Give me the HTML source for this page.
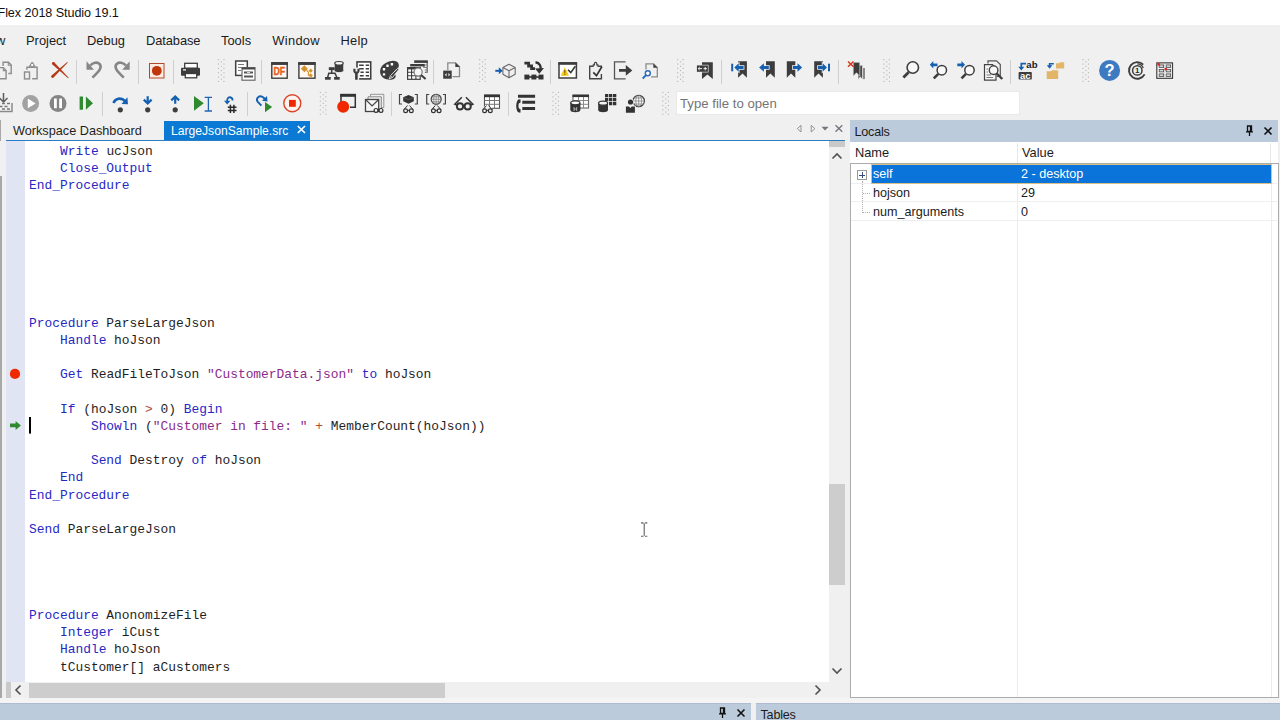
<!DOCTYPE html>
<html lang="en">
<head>
<meta charset="utf-8">
<title>Flex 2018 Studio 19.1</title>
<style>
*{box-sizing:border-box;margin:0;padding:0}
html,body{width:1280px;height:720px;overflow:hidden;background:#f0f0f0}
body{position:relative;font-family:"Liberation Sans",sans-serif;font-size:13px;color:#1e1e1e}
.abs{position:absolute}
.t{position:absolute;white-space:pre;line-height:1}
#title{left:0;top:0;width:1280px;height:25px;background:#fff}
#menubar{left:0;top:25px;width:1280px;height:30px;background:#f0f0f0}
.mi{position:absolute;top:34.500px;font-size:12.9px;white-space:pre;line-height:1;color:#1b1b1b}
.sep{position:absolute;width:1px;background:#d4d4d4}
.grip{position:absolute;width:6px;height:22px;background-image:radial-gradient(circle,#c2c2c2 0.7px,transparent 1px);background-size:3px 3px}
svg.ic{position:absolute;overflow:visible}
#ed{left:6px;top:141px;width:823px;height:540.500px;background:#fff}
#gut{left:6px;top:141px;width:19px;height:540.500px;background:#e1e4f3}
.cl{position:absolute;left:29px;font-family:"Liberation Mono",monospace;font-size:12.9px;white-space:pre;line-height:17px;height:17px;color:#1e1e1e}
.k{color:#2727c4}.s{color:#8a2a8a}.o{color:#b8482f}
.hd{background:#bccbdc}
.lt{position:absolute;white-space:pre;line-height:1;font-size:12.6px;color:#1b1b1b}
</style>
</head>
<body>
<!--TITLE-->
<div id="title" class="abs"></div>
<div class="t" style="left:-2.500px;top:7px;font-size:12.600px;letter-spacing:-0.060px;color:#111">Flex 2018 Studio 19.1</div>
<!--MENU-->
<div id="menubar" class="abs"></div>
<div class="mi" style="left:-4px">w</div>
<div class="mi" style="left:26px">Project</div>
<div class="mi" style="left:87px">Debug</div>
<div class="mi" style="left:146px;letter-spacing:-0.100px">Database</div>
<div class="mi" style="left:221px">Tools</div>
<div class="mi" style="left:272.300px;letter-spacing:0.300px">Window</div>
<div class="mi" style="left:340.600px;letter-spacing:0.200px">Help</div>
<!--TOOLBAR1-->
<svg class="ic" style="left:0;top:55px" width="1280" height="65" viewBox="0 55 1280 65" fill="none" stroke-linecap="butt">
<g id="seps" stroke="#cfcfcf" stroke-width="1">
<path d="M76.5 60V84M138.5 60V84M173.5 60V84M261.5 60V84M433.5 60V84M550.5 60V84M721.5 60V84M838.5 60V84M1010.5 60V84"/>
<path d="M102.5 92V116M247.5 92V116M391.5 92V116M508.5 92V116"/>
</g>
<g id="grips" fill="#b4b4b4"><rect x="217.9" y="59.1" width="1.1" height="1.1"/><rect x="223.4" y="59.1" width="1.1" height="1.1"/><rect x="220.8" y="61.3" width="1.1" height="1.1"/><rect x="217.9" y="63.5" width="1.1" height="1.1"/><rect x="223.4" y="63.5" width="1.1" height="1.1"/><rect x="220.8" y="65.7" width="1.1" height="1.1"/><rect x="217.9" y="67.8" width="1.1" height="1.1"/><rect x="223.4" y="67.8" width="1.1" height="1.1"/><rect x="220.8" y="70.0" width="1.1" height="1.1"/><rect x="217.9" y="72.2" width="1.1" height="1.1"/><rect x="223.4" y="72.2" width="1.1" height="1.1"/><rect x="220.8" y="74.4" width="1.1" height="1.1"/><rect x="217.9" y="76.5" width="1.1" height="1.1"/><rect x="223.4" y="76.5" width="1.1" height="1.1"/><rect x="220.8" y="78.7" width="1.1" height="1.1"/><rect x="217.9" y="80.9" width="1.1" height="1.1"/><rect x="223.4" y="80.9" width="1.1" height="1.1"/><rect x="479.1" y="59.1" width="1.1" height="1.1"/><rect x="484.6" y="59.1" width="1.1" height="1.1"/><rect x="482.0" y="61.3" width="1.1" height="1.1"/><rect x="479.1" y="63.5" width="1.1" height="1.1"/><rect x="484.6" y="63.5" width="1.1" height="1.1"/><rect x="482.0" y="65.7" width="1.1" height="1.1"/><rect x="479.1" y="67.8" width="1.1" height="1.1"/><rect x="484.6" y="67.8" width="1.1" height="1.1"/><rect x="482.0" y="70.0" width="1.1" height="1.1"/><rect x="479.1" y="72.2" width="1.1" height="1.1"/><rect x="484.6" y="72.2" width="1.1" height="1.1"/><rect x="482.0" y="74.4" width="1.1" height="1.1"/><rect x="479.1" y="76.5" width="1.1" height="1.1"/><rect x="484.6" y="76.5" width="1.1" height="1.1"/><rect x="482.0" y="78.7" width="1.1" height="1.1"/><rect x="479.1" y="80.9" width="1.1" height="1.1"/><rect x="484.6" y="80.9" width="1.1" height="1.1"/><rect x="677.1" y="59.1" width="1.1" height="1.1"/><rect x="682.6" y="59.1" width="1.1" height="1.1"/><rect x="680.0" y="61.3" width="1.1" height="1.1"/><rect x="677.1" y="63.5" width="1.1" height="1.1"/><rect x="682.6" y="63.5" width="1.1" height="1.1"/><rect x="680.0" y="65.7" width="1.1" height="1.1"/><rect x="677.1" y="67.8" width="1.1" height="1.1"/><rect x="682.6" y="67.8" width="1.1" height="1.1"/><rect x="680.0" y="70.0" width="1.1" height="1.1"/><rect x="677.1" y="72.2" width="1.1" height="1.1"/><rect x="682.6" y="72.2" width="1.1" height="1.1"/><rect x="680.0" y="74.4" width="1.1" height="1.1"/><rect x="677.1" y="76.5" width="1.1" height="1.1"/><rect x="682.6" y="76.5" width="1.1" height="1.1"/><rect x="680.0" y="78.7" width="1.1" height="1.1"/><rect x="677.1" y="80.9" width="1.1" height="1.1"/><rect x="682.6" y="80.9" width="1.1" height="1.1"/><rect x="883.4" y="59.1" width="1.1" height="1.1"/><rect x="888.9" y="59.1" width="1.1" height="1.1"/><rect x="886.3" y="61.3" width="1.1" height="1.1"/><rect x="883.4" y="63.5" width="1.1" height="1.1"/><rect x="888.9" y="63.5" width="1.1" height="1.1"/><rect x="886.3" y="65.7" width="1.1" height="1.1"/><rect x="883.4" y="67.8" width="1.1" height="1.1"/><rect x="888.9" y="67.8" width="1.1" height="1.1"/><rect x="886.3" y="70.0" width="1.1" height="1.1"/><rect x="883.4" y="72.2" width="1.1" height="1.1"/><rect x="888.9" y="72.2" width="1.1" height="1.1"/><rect x="886.3" y="74.4" width="1.1" height="1.1"/><rect x="883.4" y="76.5" width="1.1" height="1.1"/><rect x="888.9" y="76.5" width="1.1" height="1.1"/><rect x="886.3" y="78.7" width="1.1" height="1.1"/><rect x="883.4" y="80.9" width="1.1" height="1.1"/><rect x="888.9" y="80.9" width="1.1" height="1.1"/><rect x="1082.4" y="59.1" width="1.1" height="1.1"/><rect x="1087.9" y="59.1" width="1.1" height="1.1"/><rect x="1085.3" y="61.3" width="1.1" height="1.1"/><rect x="1082.4" y="63.5" width="1.1" height="1.1"/><rect x="1087.9" y="63.5" width="1.1" height="1.1"/><rect x="1085.3" y="65.7" width="1.1" height="1.1"/><rect x="1082.4" y="67.8" width="1.1" height="1.1"/><rect x="1087.9" y="67.8" width="1.1" height="1.1"/><rect x="1085.3" y="70.0" width="1.1" height="1.1"/><rect x="1082.4" y="72.2" width="1.1" height="1.1"/><rect x="1087.9" y="72.2" width="1.1" height="1.1"/><rect x="1085.3" y="74.4" width="1.1" height="1.1"/><rect x="1082.4" y="76.5" width="1.1" height="1.1"/><rect x="1087.9" y="76.5" width="1.1" height="1.1"/><rect x="1085.3" y="78.7" width="1.1" height="1.1"/><rect x="1082.4" y="80.9" width="1.1" height="1.1"/><rect x="1087.9" y="80.9" width="1.1" height="1.1"/><rect x="319.8" y="91.9" width="1.1" height="1.1"/><rect x="325.3" y="91.9" width="1.1" height="1.1"/><rect x="322.7" y="94.1" width="1.1" height="1.1"/><rect x="319.8" y="96.3" width="1.1" height="1.1"/><rect x="325.3" y="96.3" width="1.1" height="1.1"/><rect x="322.7" y="98.5" width="1.1" height="1.1"/><rect x="319.8" y="100.6" width="1.1" height="1.1"/><rect x="325.3" y="100.6" width="1.1" height="1.1"/><rect x="322.7" y="102.8" width="1.1" height="1.1"/><rect x="319.8" y="105.0" width="1.1" height="1.1"/><rect x="325.3" y="105.0" width="1.1" height="1.1"/><rect x="322.7" y="107.2" width="1.1" height="1.1"/><rect x="319.8" y="109.3" width="1.1" height="1.1"/><rect x="325.3" y="109.3" width="1.1" height="1.1"/><rect x="322.7" y="111.5" width="1.1" height="1.1"/><rect x="319.8" y="113.7" width="1.1" height="1.1"/><rect x="325.3" y="113.7" width="1.1" height="1.1"/><rect x="552.4" y="91.9" width="1.1" height="1.1"/><rect x="557.9" y="91.9" width="1.1" height="1.1"/><rect x="555.3" y="94.1" width="1.1" height="1.1"/><rect x="552.4" y="96.3" width="1.1" height="1.1"/><rect x="557.9" y="96.3" width="1.1" height="1.1"/><rect x="555.3" y="98.5" width="1.1" height="1.1"/><rect x="552.4" y="100.6" width="1.1" height="1.1"/><rect x="557.9" y="100.6" width="1.1" height="1.1"/><rect x="555.3" y="102.8" width="1.1" height="1.1"/><rect x="552.4" y="105.0" width="1.1" height="1.1"/><rect x="557.9" y="105.0" width="1.1" height="1.1"/><rect x="555.3" y="107.2" width="1.1" height="1.1"/><rect x="552.4" y="109.3" width="1.1" height="1.1"/><rect x="557.9" y="109.3" width="1.1" height="1.1"/><rect x="555.3" y="111.5" width="1.1" height="1.1"/><rect x="552.4" y="113.7" width="1.1" height="1.1"/><rect x="557.9" y="113.7" width="1.1" height="1.1"/><rect x="662.3" y="91.9" width="1.1" height="1.1"/><rect x="667.8" y="91.9" width="1.1" height="1.1"/><rect x="665.2" y="94.1" width="1.1" height="1.1"/><rect x="662.3" y="96.3" width="1.1" height="1.1"/><rect x="667.8" y="96.3" width="1.1" height="1.1"/><rect x="665.2" y="98.5" width="1.1" height="1.1"/><rect x="662.3" y="100.6" width="1.1" height="1.1"/><rect x="667.8" y="100.6" width="1.1" height="1.1"/><rect x="665.2" y="102.8" width="1.1" height="1.1"/><rect x="662.3" y="105.0" width="1.1" height="1.1"/><rect x="667.8" y="105.0" width="1.1" height="1.1"/><rect x="665.2" y="107.2" width="1.1" height="1.1"/><rect x="662.3" y="109.3" width="1.1" height="1.1"/><rect x="667.8" y="109.3" width="1.1" height="1.1"/><rect x="665.2" y="111.5" width="1.1" height="1.1"/><rect x="662.3" y="113.7" width="1.1" height="1.1"/><rect x="667.8" y="113.7" width="1.1" height="1.1"/></g>
<!--G1-->
<g stroke="#8c8c8c" stroke-width="1.400">
<path d="M3.100 66V62.200H8.500L11.200 65V73.500H8.300"/><path d="M8.300 62.200V65.200H11.200" stroke-width="1.100"/>
<path d="M-2 67.600H3.300L6.100 70.500V78.800H-2"/><path d="M3.300 67.600V70.600H6.100" stroke-width="1.100"/>
<path d="M26.900 69.800V67.200H37.100V78.800H32.200"/>
<path d="M28.600 66.800L30.900 62.900C31.500 61.800 32.900 61.800 33.500 62.900L35.700 66.800Z" fill="#8c8c8c" stroke="none"/><circle cx="32.200" cy="64.900" r="1.200" fill="#f6f6f6" stroke="none"/>
<rect x="24.500" y="72" width="5" height="6.900"/>
</g>
<g fill="#b53a18"><path d="M52.4 64.4L68.1 78.3L68.7 77.7L54.4 62.4Z"/><circle cx="53.4" cy="63.4" r="1.45"/><path d="M53.6 77.6L67.8 62.5L67.2 61.9L51.6 75.6Z"/><circle cx="52.6" cy="76.6" r="1.45"/></g>
<g stroke="#868686" stroke-width="2.600">
<path d="M90.3 65.6C92.5 62.5 97.5 61.6 99.7 64.2C102.2 67.2 100.0 70.5 92.4 77.6"/>
<path d="M86.5 61.2L86.5 69.8L94.0 69.8Z" fill="#868686" stroke="none"/>
<path d="M125.9 65.6C123.7 62.5 118.7 61.6 116.5 64.2C114.0 67.2 116.2 70.5 123.8 77.6"/>
<path d="M129.7 61.2L129.7 69.8L122.2 69.8Z" fill="#868686" stroke="none"/>
</g>
<!--G2-->
<rect x="149.500" y="63.500" width="14.500" height="14.500" fill="#fcece4" stroke="#b4472b" stroke-width="1"/>
<circle cx="156.800" cy="70.800" r="4.900" fill="#c0360c"/>
<g>
<rect x="184.700" y="63.300" width="12.600" height="5" fill="#fff" stroke="#3d3d3d" stroke-width="1.300"/>
<rect x="181" y="67.800" width="19" height="8" rx="1" fill="#3d3d3d"/>
<rect x="185.300" y="73.500" width="11.400" height="4.300" fill="#fff" stroke="#3d3d3d" stroke-width="1.300"/>
<rect x="183" y="69.300" width="3" height="1.200" fill="#fff"/>
</g>
<g>
<rect x="235.700" y="61" width="11.600" height="14.400" fill="#fff" stroke="#404040" stroke-width="1.500"/>
<path d="M238 64.500H244M238 67.500H242M238 70.500H241" stroke="#7a7a7a" stroke-width="1.200"/>
<rect x="242" y="67.600" width="13" height="12.600" fill="#fff" stroke="#6a6a6a" stroke-width="1.200"/>
<path d="M242 68.500H255" stroke="#4a4a4a" stroke-width="2"/>
<path d="M244 72.500H253M244 76.500H253" stroke="#555" stroke-width="1.800"/>
<path d="M247 72.500H250" stroke="#fff" stroke-width="0.800"/>
</g>
<!--G3-->
<g>
<rect x="271.800" y="63" width="15.400" height="15.200" fill="#fff8f3" stroke="#3d3d3d" stroke-width="1.400"/>
<path d="M271.100 63.500H287.900" stroke="#3d3d3d" stroke-width="2.900"/>
<text x="273.500" y="75.400" font-family="Liberation Sans, sans-serif" font-weight="bold" font-size="11.300" fill="#e5601c" stroke="#e5601c" stroke-width="0.400" textLength="11.600" lengthAdjust="spacingAndGlyphs">DF</text>
<rect x="298.900" y="63" width="16.100" height="15.200" fill="#fff8f3" stroke="#3d3d3d" stroke-width="1.400"/>
<path d="M298.200 63.500H315.700" stroke="#3d3d3d" stroke-width="2.900"/>
<path d="M304.400 65.300L307.900 68.800L304.400 72.300L300.900 68.800Z" fill="#d8902a"/>
<path d="M310.700 68.600L312.800 70.700L310.700 72.800L308.600 70.700Z" fill="#d8902a"/>
<path d="M310.700 73.300L312.800 75.400L310.700 77.500L308.600 75.400Z" fill="#d8902a"/>
<path d="M306.500 70.200L308.400 72V75.300H310" stroke="#d8902a" stroke-width="1.100"/>
</g>
<g fill="#3d3d3d">
<path d="M334.200 63V70.600C334.200 73.300 343.800 73.300 343.800 70.600V63Z" stroke="#f0f0f0" stroke-width="1"/>
<ellipse cx="339" cy="63.300" rx="4.200" ry="1.800" fill="#f6f6f6" stroke="#3d3d3d" stroke-width="1.200"/>
<rect x="328.800" y="67.200" width="5.900" height="2.900"/>
<rect x="325" y="77" width="5.700" height="2.700"/><rect x="334.100" y="77" width="5.600" height="2.700"/>
<path d="M331.700 70V73.200M327.700 77.300L328.800 73.200H335L336.800 77.300" fill="none" stroke="#3d3d3d" stroke-width="1.500"/>
</g>
<g>
<rect x="357" y="61.900" width="13.700" height="17" fill="#fff" stroke="#3d3d3d" stroke-width="1.600"/>
<path d="M359.100 65.200H363.700M365.700 65.200H369M359.100 68.800H363.700M365.700 68.800H369M360.500 72.200H363.700M365.700 72.200H369M359.800 75.700H363.700M365.700 75.700H369" stroke="#3d3d3d" stroke-width="1.600"/>
<rect x="352.500" y="67.600" width="6.600" height="13" fill="#f0f0f0"/>
<path d="M353.300 68.700V70.500C353.300 72.300 354.300 73.200 355.100 73.500V79.700H357.700V73.500C358.600 73.200 359.600 72.300 359.600 70.500V68.700H357.400V71.400H355.500V68.700H353.300Z" fill="#3d3d3d"/>
</g>
<g>
<path d="M392 60.900C397 60.400 399.800 63.500 398.600 67C397.800 69.300 395 69.600 394.300 71.200C393.600 73 396.800 75 395.400 77.400C394.200 79.500 390 80.400 386.500 79.300C382 78 379.500 74.300 380.200 70.200C381 65.300 386 61.500 392 60.900Z" fill="#3d3d3d"/>
<rect x="390.700" y="63" width="2.400" height="2.400" rx="0.500" fill="#fff"/><rect x="386.300" y="64.600" width="2.400" height="2.400" rx="0.500" fill="#fff"/><rect x="382.800" y="68" width="2.400" height="2.400" rx="0.500" fill="#fff"/><rect x="382.800" y="73.200" width="2.400" height="2.400" rx="0.500" fill="#fff"/>
<path d="M399 69.300L392.500 77.500L389.200 78.800L390.500 75.600L397.800 68.300Z" fill="#3d3d3d" stroke="#f0f0f0" stroke-width="0.900"/>
<path d="M391 76.200L392.300 77.400" stroke="#f0f0f0" stroke-width="0.700"/>
</g>
<!--G4-->
<g stroke="#555" stroke-width="1.100">
<path d="M427.200 61V72.300H424.800" stroke="#555"/><path d="M414.200 61.600H427.800" stroke="#3d3d3d" stroke-width="2.600"/>
<path d="M424.800 65H427M424.800 67.500H427M424.800 70H427" stroke="#777"/>
<path d="M424 64.500V68" stroke="#555"/><path d="M410.200 65.200H424.600" stroke="#3d3d3d" stroke-width="2.400"/>
<rect x="407.600" y="67.600" width="12.600" height="11.700" fill="#fff" stroke="#3d3d3d" stroke-width="1.200"/>
<path d="M407 68.300H420.500" stroke="#3d3d3d" stroke-width="2.200"/>
<path d="M407.600 72.300H420M407.600 75.800H420M411.600 69V79M415.900 69V79" stroke="#3d3d3d" stroke-width="1.100"/>
<circle cx="418.100" cy="72" r="4.100" fill="#f6f6f6" stroke="#777" stroke-width="1.200"/>
<path d="M421 75L425.600 79" stroke="#3d3d3d" stroke-width="2.100"/>
</g>
<g>
<path d="M447.800 70V62.900H455.500L459.500 66.800V76.600H452.500" stroke="#8a8a8a" stroke-width="1.300"/>
<path d="M455.300 62.400V67H460Z" fill="#3d3d3d"/>
<rect x="443.200" y="70.600" width="8.500" height="8.100" fill="#3d3d3d"/>
<path d="M446.600 73.100V76.500L444.800 74.800ZM448.400 73.100V76.500L450.200 74.800Z" fill="#e8e8e8"/>
</g>
<g>
<path d="M495.300 70.800H500" stroke="#1560b0" stroke-width="2"/><path d="M498.800 67.300L502.800 70.800L498.800 74.300Z" fill="#1560b0"/>
<path d="M509 64.200L515.200 67.500V74.300L509 77.700L502.900 74.300V67.500ZM502.900 67.500L509 70.800L515.200 67.500M509 70.800V77.700" stroke="#6a6a6a" stroke-width="1.100" stroke-linejoin="round"/>
</g>
<!--G5-->
<g fill="#333">
<path d="M524.400 63.200H528.600V66H531.600V68.700H535" fill="none" stroke="#333" stroke-width="2.800"/>
<path d="M535.500 62.300C539.800 62.800 541.300 66.500 540.500 70" fill="none" stroke="#333" stroke-width="2.400"/>
<path d="M535 68.600L544 68L539.300 73.800Z"/>
<rect x="524.400" y="74.600" width="5" height="4.900"/><rect x="531.400" y="74.600" width="5" height="4.900"/><rect x="538.500" y="74.600" width="5" height="4.900"/>
<path d="M525 77H543" stroke="#333" stroke-width="1.600"/>
</g>
<g>
<rect x="559" y="63" width="17.400" height="15" fill="#fff" stroke="#3d3d3d" stroke-width="1.500"/>
<path d="M558.300 63.500H577.100" stroke="#3d3d3d" stroke-width="2.600"/>
<path d="M564.800 67.200L568.900 75.700H560.700Z" fill="#f5c518"/>
<path d="M564.800 70V72.800M564.800 73.700V74.900" stroke="#6a4a00" stroke-width="1"/>
<path d="M568 69.700L570.800 72.600L575.300 66.300" stroke="#333" stroke-width="1.600"/>
</g>
<g stroke="#444">
<path d="M593 66.300H589.700V78.800H601.400V74" stroke-width="1.400"/><path d="M598 66.300H601.400V67.500" stroke-width="1.400"/>
<path d="M593.300 66.800V64.800H594.400V63.600C594.400 61.900 596.800 61.900 596.800 63.600V64.800H597.900V66.800" stroke-width="1.200"/>
<path d="M593.300 72.400L596.500 75.700L601.800 66.800" stroke="#333" stroke-width="1.700"/>
</g>
<g>
<path d="M625.600 61.800H614.500V78.800H625.600" stroke="#555" stroke-width="1.300"/>
<path d="M619 69H625.800V65L632.300 70.400L625.800 75.800V71.800H619Z" fill="#3d3d3d"/>
</g>
<g>
<path d="M646 69.500V63.800H653.500L657.300 67.500V76.800H651" stroke="#8a8a8a" stroke-width="1.300"/>
<path d="M653.300 63.500V67.700H657.500Z" fill="#3d3d3d"/>
<circle cx="647.800" cy="73.300" r="2.500" fill="#fff" stroke="#2a6ab8" stroke-width="1.400"/>
<path d="M646 75.200L642.700 78.500" stroke="#2a6ab8" stroke-width="1.900"/>
</g>
<!--G6-->
<g>
<path d="M702.0 62.3H712.8V79L707.4 74.6L702.0 79Z" fill="#3d3d3d"/>
<rect x="696.300" y="64.800" width="12.200" height="7.600" fill="#f0f0f0"/><rect x="696.900" y="65.400" width="11" height="6.400" fill="#3d3d3d"/>
<path d="M698.300 68.600H702M699.800 67L698.200 68.600L699.800 70.200M703.500 68.600H706.900M705.200 66.900V70.300" stroke="#fff" stroke-width="0.900"/>
<path d="M738.1 61.3H746.9V77.7L742.5 73.5L738.1 77.7Z" fill="#3d3d3d"/>
<rect x="731.200" y="63.700" width="2" height="7.600" fill="#1560b0"/>
<path d="M734.3 67.5L738.7 63.3V66.0H743.6V69.0H738.7V71.7Z" fill="none" stroke="#f0f0f0" stroke-width="1.600"/><path d="M734.3 67.5L738.7 63.3V66.0H743.6V69.0H738.7V71.7Z" fill="#1560b0"/>
<path d="M766.0 61.3H774.8V77.7L770.4 73.5L766.0 77.7Z" fill="#3d3d3d"/>
<path d="M759.1 67.5L763.9 63.3V66.0H768.8V69.0H763.9V71.7Z" fill="none" stroke="#f0f0f0" stroke-width="1.600"/><path d="M759.1 67.5L763.9 63.3V66.0H768.8V69.0H763.9V71.7Z" fill="#1560b0"/>
<path d="M786.8 61.3H795.3V77.7L791.0 73.5L786.8 77.7Z" fill="#3d3d3d"/>
<path d="M802.1 67.5L797.5 63.3V66.0H792.8V69.0H797.5V71.7Z" fill="none" stroke="#f0f0f0" stroke-width="1.600"/><path d="M802.1 67.5L797.5 63.3V66.0H792.8V69.0H797.5V71.7Z" fill="#1560b0"/>
<path d="M814.2 61.3H822.9V77.7L818.5 73.5L814.2 77.7Z" fill="#3d3d3d"/>
<path d="M827.0 67.5L822.6 63.3V66.0H818.0V69.0H822.6V71.7Z" fill="none" stroke="#f0f0f0" stroke-width="1.600"/><path d="M827.0 67.5L822.6 63.3V66.0H818.0V69.0H822.6V71.7Z" fill="#1560b0"/>
<rect x="828" y="63.700" width="2" height="7.600" fill="#1560b0"/>
</g>
<!--G7-->
<g>
<path d="M863 68H865V79.500L864 78.500L863 79.500Z" fill="#8a8a8a"/>
<path d="M858.100 65.300H862.500V79.500L860.300 76.800L858.100 79.500Z" fill="#4a4a4a" stroke="#f0f0f0" stroke-width="0.600"/>
<path d="M853.200 62.300H859.800V76.200L856.500 72.800L853.200 76.200Z" fill="#3d3d3d" stroke="#f0f0f0" stroke-width="0.600"/>
<path d="M848 61.500L853.500 66.800M853.500 61.500L848 66.800" stroke="#d23a1a" stroke-width="1.500"/>
<circle cx="912.800" cy="67.500" r="5.700" fill="#f8f8f8" stroke="#3d3d3d" stroke-width="1.600"/><path d="M908.600 72.300L903.400 77.500" stroke="#3d3d3d" stroke-width="2.800"/>
<circle cx="941.800" cy="70.200" r="4.700" fill="#f8f8f8" stroke="#3d3d3d" stroke-width="1.500"/><path d="M938.300 73.800L933.800 78.300" stroke="#3d3d3d" stroke-width="2.600"/>
<circle cx="969.500" cy="70.200" r="4.700" fill="#f8f8f8" stroke="#3d3d3d" stroke-width="1.500"/><path d="M966 73.800L961.500 78.300" stroke="#3d3d3d" stroke-width="2.600"/>
<path d="M929.8 64.8L933.3 61.0V63.4H937.5V66.2H933.3V68.6Z" fill="#1560b0"/>
<path d="M965.0 64.8L961.5 61.0V63.4H957.3V66.2H961.5V68.6Z" fill="#1560b0"/>
<path d="M988 63.500V60.800H996.500L1000.300 64.500V76.500H997" stroke="#555" stroke-width="1.200"/>
<path d="M984.500 64.700H992.500L996 68V80.200H984.500Z" fill="#f6f6f6" stroke="#444" stroke-width="1.200"/>
<path d="M986.500 69H988M986.500 72H988M986.500 75H991M986.500 77.500H993" stroke="#777" stroke-width="1"/>
<circle cx="993.600" cy="70.200" r="4.300" fill="#f8f8f8" stroke="#444" stroke-width="1.400"/><path d="M996.800 73.500L1002.300 79" stroke="#3d3d3d" stroke-width="2.400"/>
</g>
<!--G8-->
<g>
<text x="1026.300" y="67.500" font-family="Liberation Sans, sans-serif" font-weight="bold" font-size="9.800" fill="#1a1a1a" stroke="none" textLength="11.200" lengthAdjust="spacingAndGlyphs">ab</text>
<rect x="1018.600" y="71.900" width="13.200" height="7.700" rx="0.800" fill="#3d3d3d"/>
<text x="1020" y="78.500" font-family="Liberation Sans, sans-serif" font-weight="bold" font-size="9.400" fill="#fff" stroke="none" textLength="10.600" lengthAdjust="spacingAndGlyphs">ac</text>
<path d="M1026 63.700H1021.300V67.500" stroke="#1560b0" stroke-width="1.700"/><path d="M1018.300 66.800H1024.300L1021.300 70.500Z" fill="#1560b0"/>
<path d="M1056 63.300H1059L1060 62.300H1064.200V68.600H1056Z" fill="#e3b569"/>
<path d="M1046.700 71.200H1051L1052 70.200H1058.200V79H1046.700Z" fill="#e3b569"/>
<path d="M1053.800 63.700H1049.600V66" stroke="#1560b0" stroke-width="1.600"/><path d="M1046.800 65.300H1052.400L1049.600 68.800Z" fill="#1560b0"/>
</g>
<!--G9-->
<g>
<circle cx="1109.600" cy="70.400" r="10.500" fill="#3d7ac2"/>
<text x="1109.600" y="76.300" text-anchor="middle" font-family="Liberation Sans, sans-serif" font-weight="bold" font-size="16.500" fill="#fff" stroke="none">?</text>
<path d="M1143.200 64.600A8.300 8.300 0 1 0 1144.600 74.400" stroke="#3d3d3d" stroke-width="1.900"/>
<path d="M1137.300 63.900A6.500 6.500 0 0 1 1143.300 68" stroke="#3d3d3d" stroke-width="1.200"/>
<circle cx="1137.300" cy="70.400" r="4.700" stroke="#3d3d3d" stroke-width="1.500"/>
<text x="1137.200" y="73.300" text-anchor="middle" font-family="Liberation Sans, sans-serif" font-weight="bold" font-size="8" fill="#2a2a2a" stroke="none">1</text>
<rect x="1156.800" y="62.900" width="15.700" height="15.400" fill="#fff" stroke="#3d3d3d" stroke-width="1.200"/>
<rect x="1159.2" y="64.9" width="4.4" height="2.5" fill="#d8d8d8" stroke="#555" stroke-width="0.9"/><rect x="1159.2" y="69.4" width="4.4" height="2.5" fill="#d8d8d8" stroke="#555" stroke-width="0.9"/><rect x="1159.2" y="73.9" width="4.4" height="2.5" fill="#d8d8d8" stroke="#555" stroke-width="0.9"/><rect x="1166.2" y="64.9" width="4.4" height="2.5" fill="#d8d8d8" stroke="#555" stroke-width="0.9"/><rect x="1166.2" y="69.4" width="4.4" height="2.5" fill="#d8d8d8" stroke="#555" stroke-width="0.9"/><rect x="1166.2" y="73.9" width="4.4" height="2.5" fill="#d8d8d8" stroke="#555" stroke-width="0.9"/>
<path d="M1164.700 63.500V77.800" stroke="#c8c8c8" stroke-width="0.800"/>
<circle cx="1158.700" cy="64.400" r="1.300" fill="#d22"/><circle cx="1165.700" cy="69.100" r="1.300" fill="#d22"/>
</g>
<!--R2A-->
<g stroke="#5c5c5c" stroke-width="1.5">
<path d="M3.5 93V101M-0.500 98L3.500 102L7.500 98"/>
<path d="M-2 111.500H12V103" stroke="#8a8a8a"/>
<path d="M2 103.500H5M7 103.500H10M-0.500 106.500H2.500M4.500 106.500H7.500M2 109H5M7 109H10" stroke="#777" stroke-width="1.6"/>
</g>
<circle cx="30.600" cy="103.400" r="8.500" fill="#a2a2a2"/><path d="M27.800 98.600V108.200L35.600 103.400Z" fill="#fff"/>
<circle cx="58" cy="103.400" r="8.500" fill="#858585"/><path d="M54 98.500H56.800V108.300H54ZM59.200 98.500H62V108.300H59.200Z" fill="#fff"/>
<path d="M79.600 96.500H83V109.800H79.600ZM85.900 96.500V109.800L93 103.200Z" fill="#2f8a2f"/>
<path d="M113.500 103C115 98.500 121 96.800 125 101" stroke="#1560b0" stroke-width="2.600"/>
<path d="M121.500 104L128 104.300L127.400 97.200Z" fill="#1560b0"/>
<circle cx="120.300" cy="109.800" r="2.600" fill="#3e3e3e"/>
<!--R2B-->
<g stroke="#1560b0" stroke-width="2.200">
<path d="M147.700 96.300V103M143.800 99.600L147.700 103.500L151.600 99.600"/>
<path d="M175.200 97V103.800M171.300 100.400L175.200 96.500L179.100 100.400"/>
</g>
<circle cx="147.700" cy="109.800" r="2.600" fill="#3e3e3e"/>
<circle cx="175.200" cy="109.800" r="2.600" fill="#3e3e3e"/>
<path d="M194 96V110.700L203.800 103.300Z" fill="#2f8a2f"/>
<path d="M204.700 97.300H212M204.700 111H212M208.400 97.300V111" stroke="#1e64b4" stroke-width="1.300"/>
<path d="M232.600 100.500C232.600 96.500 227.400 96 227.200 100V103" stroke="#1560b0" stroke-width="1.800"/>
<path d="M224 100.800L227.200 104.600L230.400 100.800Z" fill="#1560b0"/>
<path d="M230.400 104.700V113M233.900 104.700V113M227.800 107.300H236.500M227.800 110.500H236.500" stroke="#2a2a2a" stroke-width="1.500"/>
<path d="M261.400 105.600L257.600 101.600C255.500 98.500 259 95 262.500 96.800C264 97.600 265 99 265.200 100.500" stroke="#1560b0" stroke-width="1.900"/>
<path d="M262 100.800L267.500 101.500L267 96Z" fill="#1560b0"/>
<path d="M265 102V112.300L272.200 107.100Z" fill="#2f8a2f"/>
<!--R2C-->
<circle cx="292.300" cy="103.300" r="8.500" fill="#fdf3ef" stroke="#d8452a" stroke-width="1.400"/>
<rect x="289" y="99.900" width="6.800" height="6.900" fill="#f02800"/>
<path d="M341 108V95H355.300V107.300H350" stroke="#333" stroke-width="1.500"/>
<path d="M340.200 95.300H356" stroke="#333" stroke-width="3"/>
<circle cx="343.200" cy="106.800" r="6" fill="#f02800"/>
<g stroke="#555" stroke-width="1.100">
<path d="M370.500 96.500V94.300H383.800V107.500H381.500" stroke="#8c8c8c" stroke-width="0.900"/>
<path d="M368 99V96.800H381.300V110H379" stroke="#7c7c7c" stroke-width="0.900"/>
<rect x="365.500" y="99.500" width="13.200" height="12" fill="#f6f6f6" stroke="#444" stroke-width="1.300"/>
<path d="M365.800 99.800L372.100 106L378.400 99.800" stroke="#444" stroke-width="1.200"/>
<circle cx="376" cy="110.400" r="1.900" fill="#f0f0f0" stroke="#333" stroke-width="1.200"/><circle cx="381" cy="110.400" r="1.900" fill="#f0f0f0" stroke="#333" stroke-width="1.200"/>
<path d="M377.900 110H379.100" stroke="#333"/>
</g>
<!--R2D-->
<g id="gl1">
<path d="M402 94.500H399.500V104H402M414.800 94.500H417.300V104H414.800" stroke="#444" stroke-width="1.200"/>
<path d="M408.500 95L413.800 97.300V101.300L408.500 103.800L403.200 101.300V97.300Z" fill="#333"/>
<path d="M403.200 97.300L408.500 99.600L413.800 97.300" stroke="#777" stroke-width="0.600"/>
<circle cx="405.600" cy="110.700" r="1.900" stroke="#333" stroke-width="1.200"/><circle cx="411.300" cy="110.700" r="1.900" stroke="#333" stroke-width="1.200"/>
<path d="M404 109.500L407.500 105.500M413 109.500L409.500 105.500M407.500 110.300H409.400" stroke="#333" stroke-width="1"/>
</g>
<g id="gl2">
<path d="M429.200 94.500H426.700V104H429.200M442.900 94.500H445.400V104H442.900" stroke="#444" stroke-width="1.200"/>
<circle cx="436.200" cy="99.300" r="5" stroke="#444" stroke-width="1.200"/>
<path d="M436.200 94.300V104.300M431.200 99.300H441.200M432 96.800H440.400M432 101.800H440.400" stroke="#777" stroke-width="0.700"/>
<ellipse cx="436.200" cy="99.300" rx="2.500" ry="5" stroke="#777" stroke-width="0.700"/>
<circle cx="433.400" cy="110.700" r="1.900" stroke="#333" stroke-width="1.200"/><circle cx="439.100" cy="110.700" r="1.900" stroke="#333" stroke-width="1.200"/>
<path d="M431.800 109.500L435.300 105.500M440.800 109.500L437.300 105.500M435.300 110.300H437.200" stroke="#333" stroke-width="1"/>
</g>
<g id="gl3" stroke="#333">
<circle cx="460" cy="106.400" r="3.100" stroke-width="1.900"/><circle cx="467.700" cy="106.400" r="3.100" stroke-width="1.900"/>
<path d="M463 105.600H464.700" stroke-width="1.400"/>
<path d="M456.800 105L454.800 104.200L461.800 97.200M470.900 105L472.900 104.200L465.900 97.200" stroke-width="1.500"/>
</g>
<g id="gl4">
<rect x="484.500" y="95.500" width="15" height="12.800" fill="#fff" stroke="#555" stroke-width="1.100"/>
<path d="M484 95.800H500" stroke="#333" stroke-width="2.800"/>
<path d="M484.500 100.500H499.500M484.500 104.300H499.500M489.500 97V108.300M494.500 97V108.300" stroke="#777" stroke-width="1"/>
<rect x="482" y="106.500" width="10" height="6.500" fill="#f0f0f0"/>
<circle cx="484.600" cy="110.700" r="1.900" stroke="#333" stroke-width="1.200"/><circle cx="490.300" cy="110.700" r="1.900" stroke="#333" stroke-width="1.200"/>
<path d="M483 109.500L486.500 105.500M492 109.500L488.500 105.500M486.500 110.300H488.400" stroke="#333" stroke-width="1"/>
</g>
<g id="lst">
<path d="M518 96.300H535.100M522.300 102.350H535.100M522.300 108.500H535.100" stroke="#333" stroke-width="3"/>
<path d="M520.400 99.200L518.200 99.500C515.600 102 515.600 109.800 518.200 112.300L520.400 112.700L520.600 109.300L519 108.600C518.300 106.800 518.300 105 519 103.200L520.600 102.500Z" fill="#333"/>
</g>
<!--R2E-->
<g>
<rect x="573" y="95.500" width="15.500" height="12.500" fill="#fff" stroke="#666" stroke-width="1.100"/>
<path d="M572.500 95.800H589" stroke="#333" stroke-width="2.600"/>
<path d="M573 100.500H588.500M573 104.300H588.500M578.500 97V108M583.500 97V108" stroke="#888" stroke-width="1"/>
<path d="M570.300 103V110C570.300 113 580.400 113 580.400 110V103Z" fill="#333"/>
<ellipse cx="575.350" cy="102.800" rx="4.600" ry="2" fill="#fff" stroke="#333" stroke-width="1.200"/>
<path d="M574 107V111M576.700 107V111M574 109H576.700" stroke="#ddd" stroke-width="0.700"/>
</g>
<g fill="#333">
<path d="M605.0 94.0h3.3v3.3h-3.3ZM609.0 94.0h3.3v3.3h-3.3ZM613.0 94.0h3.3v3.3h-3.3ZM605.0 98.0h3.3v3.3h-3.3ZM609.0 98.0h3.3v3.3h-3.3ZM613.0 98.0h3.3v3.3h-3.3ZM609.0 102.0h3.3v3.3h-3.3ZM613.0 102.0h3.3v3.3h-3.3Z"/>
<path d="M598.200 103.300V110C598.200 113 608 113 608 110V103.300Z"/>
<ellipse cx="603.100" cy="103.200" rx="4.500" ry="2" fill="#f4f4f4" stroke="#333" stroke-width="1.200"/>
</g>
<g>
<circle cx="638.700" cy="101" r="5.700" fill="#fafafa" stroke="#444" stroke-width="1.200"/>
<path d="M638.700 95.300V106.700M633 101H644.400M634 98H643.400M634 104H643.400" stroke="#777" stroke-width="0.700"/>
<ellipse cx="638.700" cy="101" rx="2.900" ry="5.700" stroke="#777" stroke-width="0.700"/>
<circle cx="630.500" cy="102" r="3.400" fill="#f0f0f0"/>
<circle cx="630.500" cy="102" r="2.600" fill="#333"/>
<rect x="625.200" y="105.600" width="10.400" height="8" fill="#f0f0f0"/>
<path d="M625.900 112.700V106.400H629L630.400 108L631.800 106.400H634.900V112.700Z" fill="#333"/>
</g>
</svg>
<!--TOOLBAR2-->
<div class="abs" style="left:676px;top:90.500px;width:343.500px;height:24px;background:#fff;border:1px solid #e9e9e9"></div>
<div class="t" style="left:680px;top:97px;font-size:13.2px;color:#747474">Type file to open</div>
<!--TABS-->
<div class="abs" style="left:0;top:120px;width:1.300px;height:21px;background:#a8a8a8"></div>
<div class="t" style="left:13px;top:125px;font-size:12.7px;color:#1e1e1e">Workspace Dashboard</div>
<div class="abs" style="left:164px;top:120.6px;width:146px;height:20px;background:#0a7ad4"></div>
<div class="t" style="left:171px;top:125px;font-size:12.150px;color:#fff">LargeJsonSample.src</div>
<div class="abs" style="left:6px;top:139.6px;width:839px;height:1.6px;background:#2a7cc4"></div>
<!--EDITOR-->
<div id="ed" class="abs"></div>
<div id="gut" class="abs"></div>
<!--CODE-->
<div class="cl" style="top:142.5px">    <span class="k">Write</span> ucJson</div>
<div class="cl" style="top:159.7px">    <span class="k">Close_Output</span></div>
<div class="cl" style="top:176.9px"><span class="k">End_Procedure</span></div>
<div class="cl" style="top:314.5px"><span class="k">Procedure</span> ParseLargeJson</div>
<div class="cl" style="top:331.7px">    <span class="k">Handle</span> hoJson</div>
<div class="cl" style="top:366.1px">    <span class="k">Get</span> ReadFileToJson <span class="s">"CustomerData.json"</span> <span class="k">to</span> hoJson</div>
<div class="cl" style="top:400.5px">    <span class="k">If</span> (hoJson <span class="o">&gt;</span> 0) <span class="k">Begin</span></div>
<div class="cl" style="top:417.7px">        <span class="k">Showln</span> (<span class="s">"Customer in file: "</span> <span class="o">+</span> MemberCount(hoJson))</div>
<div class="cl" style="top:452.1px">        <span class="k">Send</span> Destroy <span class="k">of</span> hoJson</div>
<div class="cl" style="top:469.3px">    <span class="k">End</span></div>
<div class="cl" style="top:486.5px"><span class="k">End_Procedure</span></div>
<div class="cl" style="top:520.9px"><span class="k">Send</span> ParseLargeJson</div>
<div class="cl" style="top:606.9px"><span class="k">Procedure</span> AnonomizeFile</div>
<div class="cl" style="top:624.1px">    <span class="k">Integer</span> iCust</div>
<div class="cl" style="top:641.3px">    <span class="k">Handle</span> hoJson</div>
<div class="cl" style="top:658.5px">    tCustomer[] aCustomers</div>
<!--MARKS-->
<svg class="ic" style="left:0;top:120px" width="860" height="580" viewBox="0 120 860 580" fill="none">
<path d="M801 125.300V132L797.300 128.650Z" stroke="#8a8a8a" stroke-width="0.900"/>
<path d="M811.200 125.300V132L814.900 128.650Z" stroke="#8a8a8a" stroke-width="0.900"/>
<path d="M821.500 126.800H828.600L825.050 130.400Z" fill="#74747e"/>
<path d="M835.500 125.200L842.300 131.800M842.300 125.200L835.500 131.800" stroke="#74747e" stroke-width="1.300"/>
<path d="M297.800 126L305 133M305 126L297.800 133" stroke="#fff" stroke-width="1.700"/>
<circle cx="15" cy="373.900" r="5.100" fill="#f02800"/>
<path d="M10 423.600H15.600V420.900L20.900 425.400L15.600 429.900V427.200H10Z" fill="#2f8a2f"/>
<rect x="29" y="417" width="2" height="16.600" fill="#000"/>
<path d="M641 522.900H643.500M645 522.900H647.300M641 536.200H643.500M645 536.200H647.300M644.200 523.300V535.800" stroke="#606060" stroke-width="1.100"/>
</svg>
<!--SCROLL-->
<div class="abs" style="left:829px;top:141px;width:17px;height:557px;background:#f0f0f0"></div>
<div class="abs" style="left:829px;top:141px;width:16px;height:6px;background:#c9c9c9"></div>
<div class="abs" style="left:829px;top:484px;width:16px;height:101px;background:#cdcdcd"></div>
<svg class="ic" style="left:831px;top:152px" width="12" height="8" viewBox="0 0 12 8"><path d="M1.5 6.5 L6 2 L10.5 6.5" fill="none" stroke="#505050" stroke-width="1.6"/></svg>
<svg class="ic" style="left:831px;top:667px" width="12" height="8" viewBox="0 0 12 8"><path d="M1.5 1.5 L6 6 L10.5 1.5" fill="none" stroke="#505050" stroke-width="1.6"/></svg>
<div class="abs" style="left:6px;top:681.500px;width:840px;height:16.500px;background:#f0f0f0"></div>
<div class="abs" style="left:6px;top:682px;width:5px;height:16px;background:#c9c9c9"></div>
<div class="abs" style="left:29px;top:682.500px;width:416px;height:15px;background:#cdcdcd"></div>
<svg class="ic" style="left:14px;top:684px" width="8" height="12" viewBox="0 0 8 12"><path d="M6.5 1.5 L2 6 L6.5 10.5" fill="none" stroke="#505050" stroke-width="1.6"/></svg>
<svg class="ic" style="left:814px;top:684px" width="8" height="12" viewBox="0 0 8 12"><path d="M1.5 1.5 L6 6 L1.5 10.5" fill="none" stroke="#505050" stroke-width="1.6"/></svg>
<div class="abs" style="left:0;top:176px;width:1.5px;height:522px;background:#a8a8a8"></div>
<!--LOCALS-->
<div class="abs hd" style="left:850px;top:120px;width:428px;height:22px"></div>
<div class="lt" style="left:854.500px;top:126px;font-size:12.600px;letter-spacing:-0.200px">Locals</div>
<svg class="ic" style="left:1244px;top:125px" width="11" height="12" viewBox="0 0 11 12"><path d="M3.5 1 H7.5 V6.5 H3.5 Z M6.5 1 V6.5 M2 6.8 H9 M5.5 7 V11" fill="none" stroke="#111" stroke-width="1.3"/></svg>
<svg class="ic" style="left:1263px;top:126px" width="10" height="10" viewBox="0 0 10 10"><path d="M1.5 1.5 L8.5 8.5 M8.5 1.5 L1.5 8.5" fill="none" stroke="#111" stroke-width="1.6"/></svg>
<div class="abs" style="left:850px;top:142px;width:428px;height:21px;background:#fff"></div>
<div class="abs" style="left:1017px;top:143px;width:1px;height:20px;background:#e8e8e8"></div>
<div class="abs" style="left:1270px;top:143px;width:1px;height:20px;background:#e8e8e8"></div>
<div class="lt" style="left:855px;top:147px;font-size:12.8px">Name</div>
<div class="lt" style="left:1022px;top:147px;font-size:12.8px">Value</div>
<div class="abs" style="left:849.500px;top:163px;width:429.500px;height:535px;background:#fff;border:1.400px solid #ababab"></div>
<div class="abs" style="left:1017px;top:164px;width:1px;height:533px;background:#ececec"></div>
<div class="abs" style="left:1271px;top:164px;width:1px;height:533px;background:#ececec"></div>
<div class="abs" style="left:851px;top:183px;width:426px;height:1px;background:#efefef"></div>
<div class="abs" style="left:851px;top:201px;width:426px;height:1px;background:#efefef"></div>
<div class="abs" style="left:851px;top:220px;width:426px;height:1px;background:#efefef"></div>
<div class="abs" style="left:871px;top:164px;width:401px;height:20px;background:#0a74da;border:1px solid #d9c08a"></div>
<div class="abs" style="left:857px;top:170px;width:10px;height:10px;background:#fff;border:1px solid #9a9a9a"></div>
<div class="abs" style="left:859px;top:174.5px;width:6px;height:1px;background:#3a4a7a"></div>
<div class="abs" style="left:861.5px;top:172px;width:1px;height:6px;background:#3a4a7a"></div>
<div class="abs" style="left:862px;top:181px;width:0;height:32px;border-left:1px dotted #b0b0b0"></div>
<div class="abs" style="left:863px;top:193px;width:7px;height:0;border-top:1px dotted #b0b0b0"></div>
<div class="abs" style="left:863px;top:212px;width:7px;height:0;border-top:1px dotted #b0b0b0"></div>
<div class="lt" style="left:873px;top:168px;color:#fff">self</div>
<div class="lt" style="left:1021px;top:168px;color:#fff">2 - desktop</div>
<div class="lt" style="left:873px;top:187px">hojson</div>
<div class="lt" style="left:1021px;top:187px">29</div>
<div class="lt" style="left:873px;top:206px">num_arguments</div>
<div class="lt" style="left:1021px;top:206px">0</div>
<!--BOTTOM-->
<div class="abs" style="left:0;top:698px;width:1280px;height:5px;background:#f4f4f4"></div>
<div class="abs hd" style="left:0;top:703px;width:751px;height:17px;border-top:1px solid #aebccd"></div>
<div class="abs hd" style="left:756px;top:703px;width:524px;height:17px;border-top:1px solid #aebccd"></div>
<svg class="ic" style="left:717px;top:707px" width="11" height="12" viewBox="0 0 11 12"><path d="M3.5 1 H7.5 V6.5 H3.5 Z M6.5 1 V6.5 M2 6.8 H9 M5.5 7 V11" fill="none" stroke="#111" stroke-width="1.3"/></svg>
<svg class="ic" style="left:736px;top:708px" width="10" height="10" viewBox="0 0 10 10"><path d="M1.5 1.5 L8.5 8.5 M8.5 1.5 L1.5 8.5" fill="none" stroke="#111" stroke-width="1.6"/></svg>
<div class="lt" style="left:760.500px;top:709px;font-size:12.600px;letter-spacing:-0.200px">Tables</div>
</body>
</html>
